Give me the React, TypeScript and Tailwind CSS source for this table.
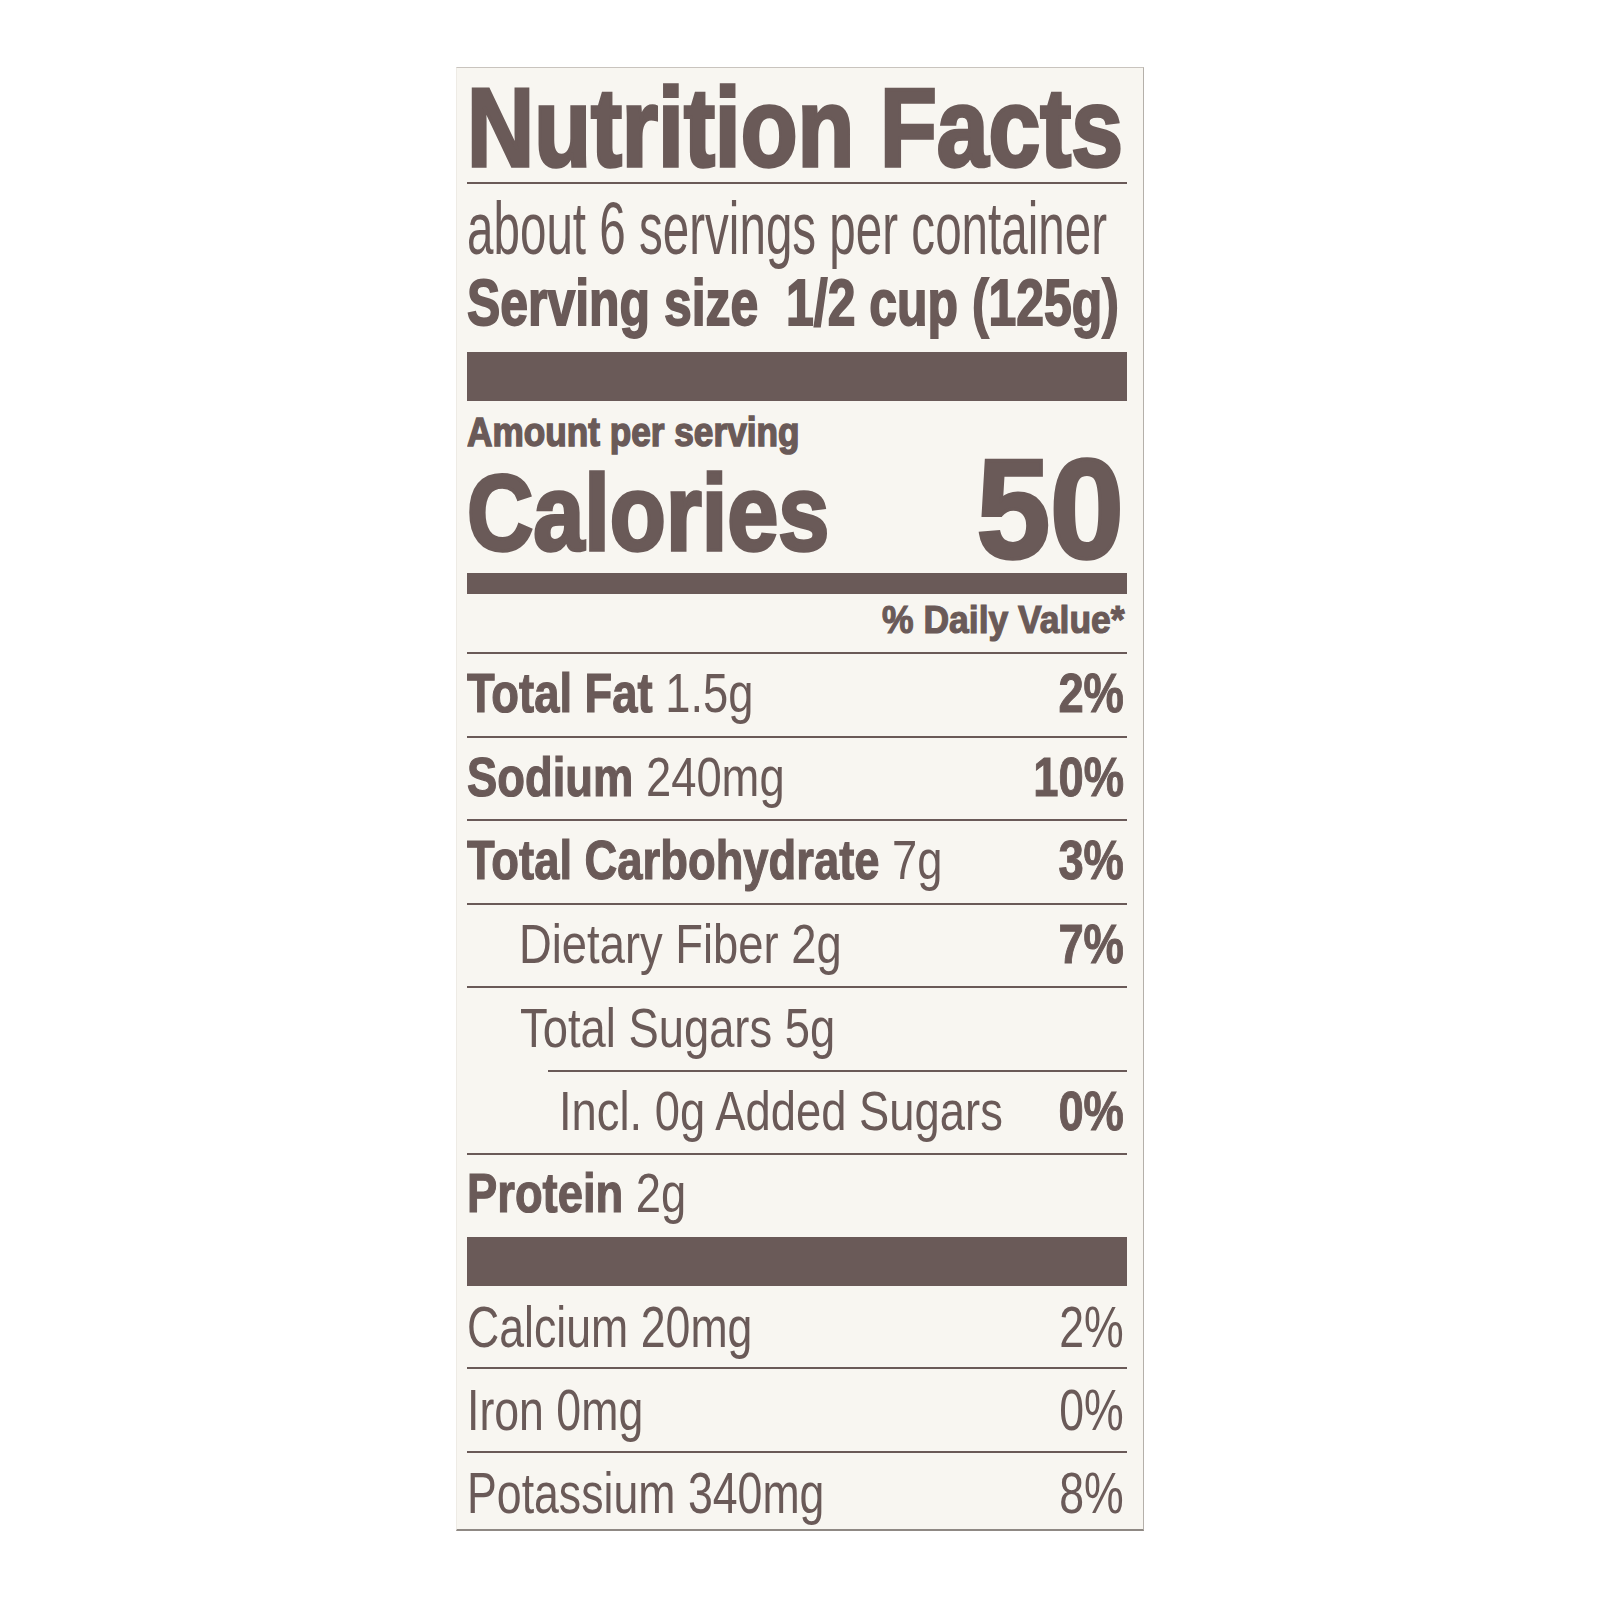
import React from "react";

const rule = "h-[2px] bg-[#6a5a58]";
const bar = "bg-[#6a5a58]";
const rowL =
  "inline-block origin-left scale-x-[0.81] whitespace-pre text-[56px] leading-none";
const rowR =
  "shrink-0 inline-block origin-right scale-x-[0.81] whitespace-pre text-[56px] leading-none font-bold [-webkit-text-stroke:1px_#6a5a58]";
const boldPart = "font-bold [-webkit-text-stroke:1.2px_#6a5a58]";
const minL =
  "inline-block origin-left scale-x-[0.77] whitespace-pre text-[58px] leading-none";
const minR =
  "shrink-0 inline-block origin-right scale-x-[0.77] whitespace-pre text-[58px] leading-none";

function NutrientRow({
  bold,
  rest,
  pct,
  indent,
  pt,
  h,
}: {
  bold?: string;
  rest: string;
  pct?: string;
  indent?: string;
  pt: string;
  h: string;
}) {
  return (
    <div className={`flex items-start pr-[3px] ${h} ${pt} ${indent ?? ""}`}>
      <div className="flex-1 min-w-0 whitespace-nowrap">
        <span className={rowL}>
          {bold ? <span className={boldPart}>{bold}</span> : null}
          {bold ? " " : ""}
          {rest}
        </span>
      </div>
      {pct ? <span className={rowR}>{pct}</span> : null}
    </div>
  );
}

function MineralRow({ label, pct, pt, h }: { label: string; pct: string; pt: string; h: string }) {
  return (
    <div className={`flex items-start pr-[3px] ${h} ${pt}`}>
      <div className="flex-1 min-w-0 whitespace-nowrap">
        <span className={minL}>{label}</span>
      </div>
      <span className={minR}>{pct}</span>
    </div>
  );
}

export default function App() {
  return (
    <div className="w-[1600px] h-[1600px] bg-white flex justify-center pt-[67px] font-['Liberation_Sans',Arial,sans-serif] text-[#6a5a58]">
      <div className="w-[688px] h-[1464px] bg-[#f8f6f1] border-t border-t-[#c9c4be] border-r border-r-[#b5b0aa] border-b-2 border-b-[#8f8984] border-l border-l-[#eeebe5] pl-[10px] pr-[16px] flex flex-col">
        {/* Title */}
        <div className="mt-[4px] h-[110px] whitespace-nowrap">
          <span className="inline-block origin-left scale-x-[0.83] whitespace-pre text-[112px] leading-none font-bold [-webkit-text-stroke:3.5px_#6a5a58]">
            Nutrition Facts
          </span>
        </div>
        <div className={rule} />
        <div className="mt-[8px] h-[79px] whitespace-nowrap">
          <span className="inline-block origin-left scale-x-[0.643] whitespace-pre text-[74px] leading-none">
            about 6 servings per container
          </span>
        </div>
        <div className="h-[81px] whitespace-nowrap">
          <span className="inline-block origin-left scale-x-[0.78] whitespace-pre text-[64px] leading-none font-bold [-webkit-text-stroke:1.8px_#6a5a58]">
            Serving size  1/2 cup (125g)
          </span>
        </div>
        <div className={`h-[49px] ${bar}`} />
        <div className="mt-[11px] h-[30px] whitespace-nowrap">
          <span className="inline-block origin-left scale-x-[0.88] whitespace-pre text-[40px] leading-none font-bold [-webkit-text-stroke:1.5px_#6a5a58]">
            Amount per serving
          </span>
        </div>
        <div className="h-[131px] flex items-end pr-[3px]">
          <div className="flex-1 min-w-0 whitespace-nowrap mb-[6px]">
            <span className="inline-block origin-left scale-x-[0.85] whitespace-pre text-[108px] leading-none font-bold [-webkit-text-stroke:3.5px_#6a5a58]">
              Calories
            </span>
          </div>
          <span className="shrink-0 -mb-[7px] inline-block origin-right scale-x-[0.94] whitespace-pre text-[141px] leading-none font-bold [-webkit-text-stroke:3.5px_#6a5a58]">
            50
          </span>
        </div>
        <div className={`h-[21px] ${bar}`} />
        <div className="mt-[6px] h-[52px] flex justify-end pr-[2px]">
          <span className="inline-block origin-right scale-x-[0.91] whitespace-pre text-[39px] leading-none font-bold [-webkit-text-stroke:1.2px_#6a5a58]">
            % Daily Value*
          </span>
        </div>
        <div className={rule} />
        <NutrientRow bold="Total Fat" rest="1.5g" pct="2%" pt="pt-[11px]" h="h-[81.5px]" />
        <div className={rule} />
        <NutrientRow bold="Sodium" rest="240mg" pct="10%" pt="pt-[11px]" h="h-[81.5px]" />
        <div className={rule} />
        <NutrientRow bold="Total Carbohydrate" rest="7g" pct="3%" pt="pt-[11px]" h="h-[81.5px]" />
        <div className={rule} />
        <NutrientRow rest="Dietary Fiber 2g" pct="7%" indent="pl-[52px]" pt="pt-[11px]" h="h-[81.5px]" />
        <div className={rule} />
        <NutrientRow rest="Total Sugars 5g" indent="pl-[53px]" pt="pt-[12px]" h="h-[81.5px]" />
        <div className={`ml-[81px] ${rule}`} />
        <NutrientRow rest="Incl. 0g Added Sugars" pct="0%" indent="pl-[92px]" pt="pt-[11px]" h="h-[81.5px]" />
        <div className={rule} />
        <NutrientRow bold="Protein" rest="2g" pt="pt-[10px]" h="h-[82px]" />
        <div className={`h-[49px] ${bar}`} />
        <MineralRow label="Calcium 20mg" pct="2%" pt="pt-[12px]" h="h-[81px]" />
        <div className={rule} />
        <MineralRow label="Iron 0mg" pct="0%" pt="pt-[12px]" h="h-[82px]" />
        <div className={rule} />
        <MineralRow label="Potassium 340mg" pct="8%" pt="pt-[11px]" h="flex-1" />
      </div>
    </div>
  );
}
